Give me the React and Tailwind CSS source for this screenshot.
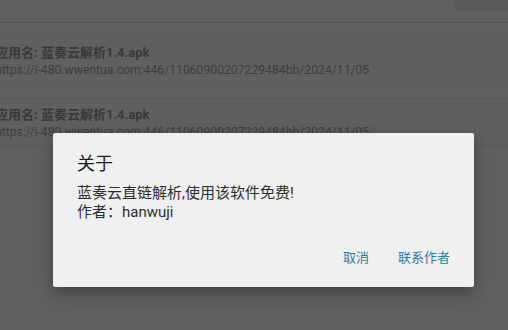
import React from 'react';

const items = [
  { name: '应用名: 蓝奏云解析1.4.apk', url: 'https://i-480.wwentua.com:446/11060900207229484bb/2024/11/05' },
  { name: '应用名: 蓝奏云解析1.4.apk', url: 'https://i-480.wwentua.com:446/11060900207229484bb/2024/11/05' },
];

const font = { fontFamily: 'Roboto, "Noto Sans CJK SC", sans-serif' };

const App = () => {
  return (
    <div className="relative w-[508px] h-[330px] overflow-hidden bg-[#f3f3f3]" style={font}>
      {/* Top bar */}
      <div className="h-[23px] border-b border-[#d0d0d0] flex justify-end">
        <div className="w-[54px] h-[11px] bg-[#e2e2e2] rounded-bl-[2px]" />
      </div>

      {/* List */}
      <div className="pt-[13px] space-y-[14px]">
        {items.map((it, i) => (
          <div key={i} className="h-[48px] bg-[#f0f0f0] border-y border-[#e0e0e0]">
            <div className="-ml-[5px] pt-[6px]">
              <div className="text-[13px] leading-[19px] font-bold text-[#8e8e8e] whitespace-nowrap">{it.name}</div>
              <div className="text-[12.2px] leading-[16px] text-[#989898] whitespace-nowrap">{it.url}</div>
            </div>
          </div>
        ))}
      </div>

      {/* Dim overlay */}
      <div className="absolute inset-0 bg-black/60" />

      {/* Dialog */}
      <div className="absolute left-[53px] top-[133px] w-[421px] h-[154px] bg-[#eff0f2] rounded-[2px] shadow-[0_6px_18px_rgba(0,0,0,0.35)] flex flex-col px-[24px]">
        <div className="pt-[18px] text-[18px] leading-[26px] text-[#1e1e1e]">关于</div>
        <div className="pt-[7px] text-[15px] leading-[19px] text-[#2e2e2e]">
          <div>蓝奏云直链解析,使用该软件免费!</div>
          <div>作者：hanwuji</div>
        </div>
        <div className="mt-auto mb-[20px] flex justify-end gap-[29px] text-[13px] leading-[18px] text-[#2d7ea3]">
          <span>取消</span>
          <span>联系作者</span>
        </div>
      </div>
    </div>
  );
};

export default App;
